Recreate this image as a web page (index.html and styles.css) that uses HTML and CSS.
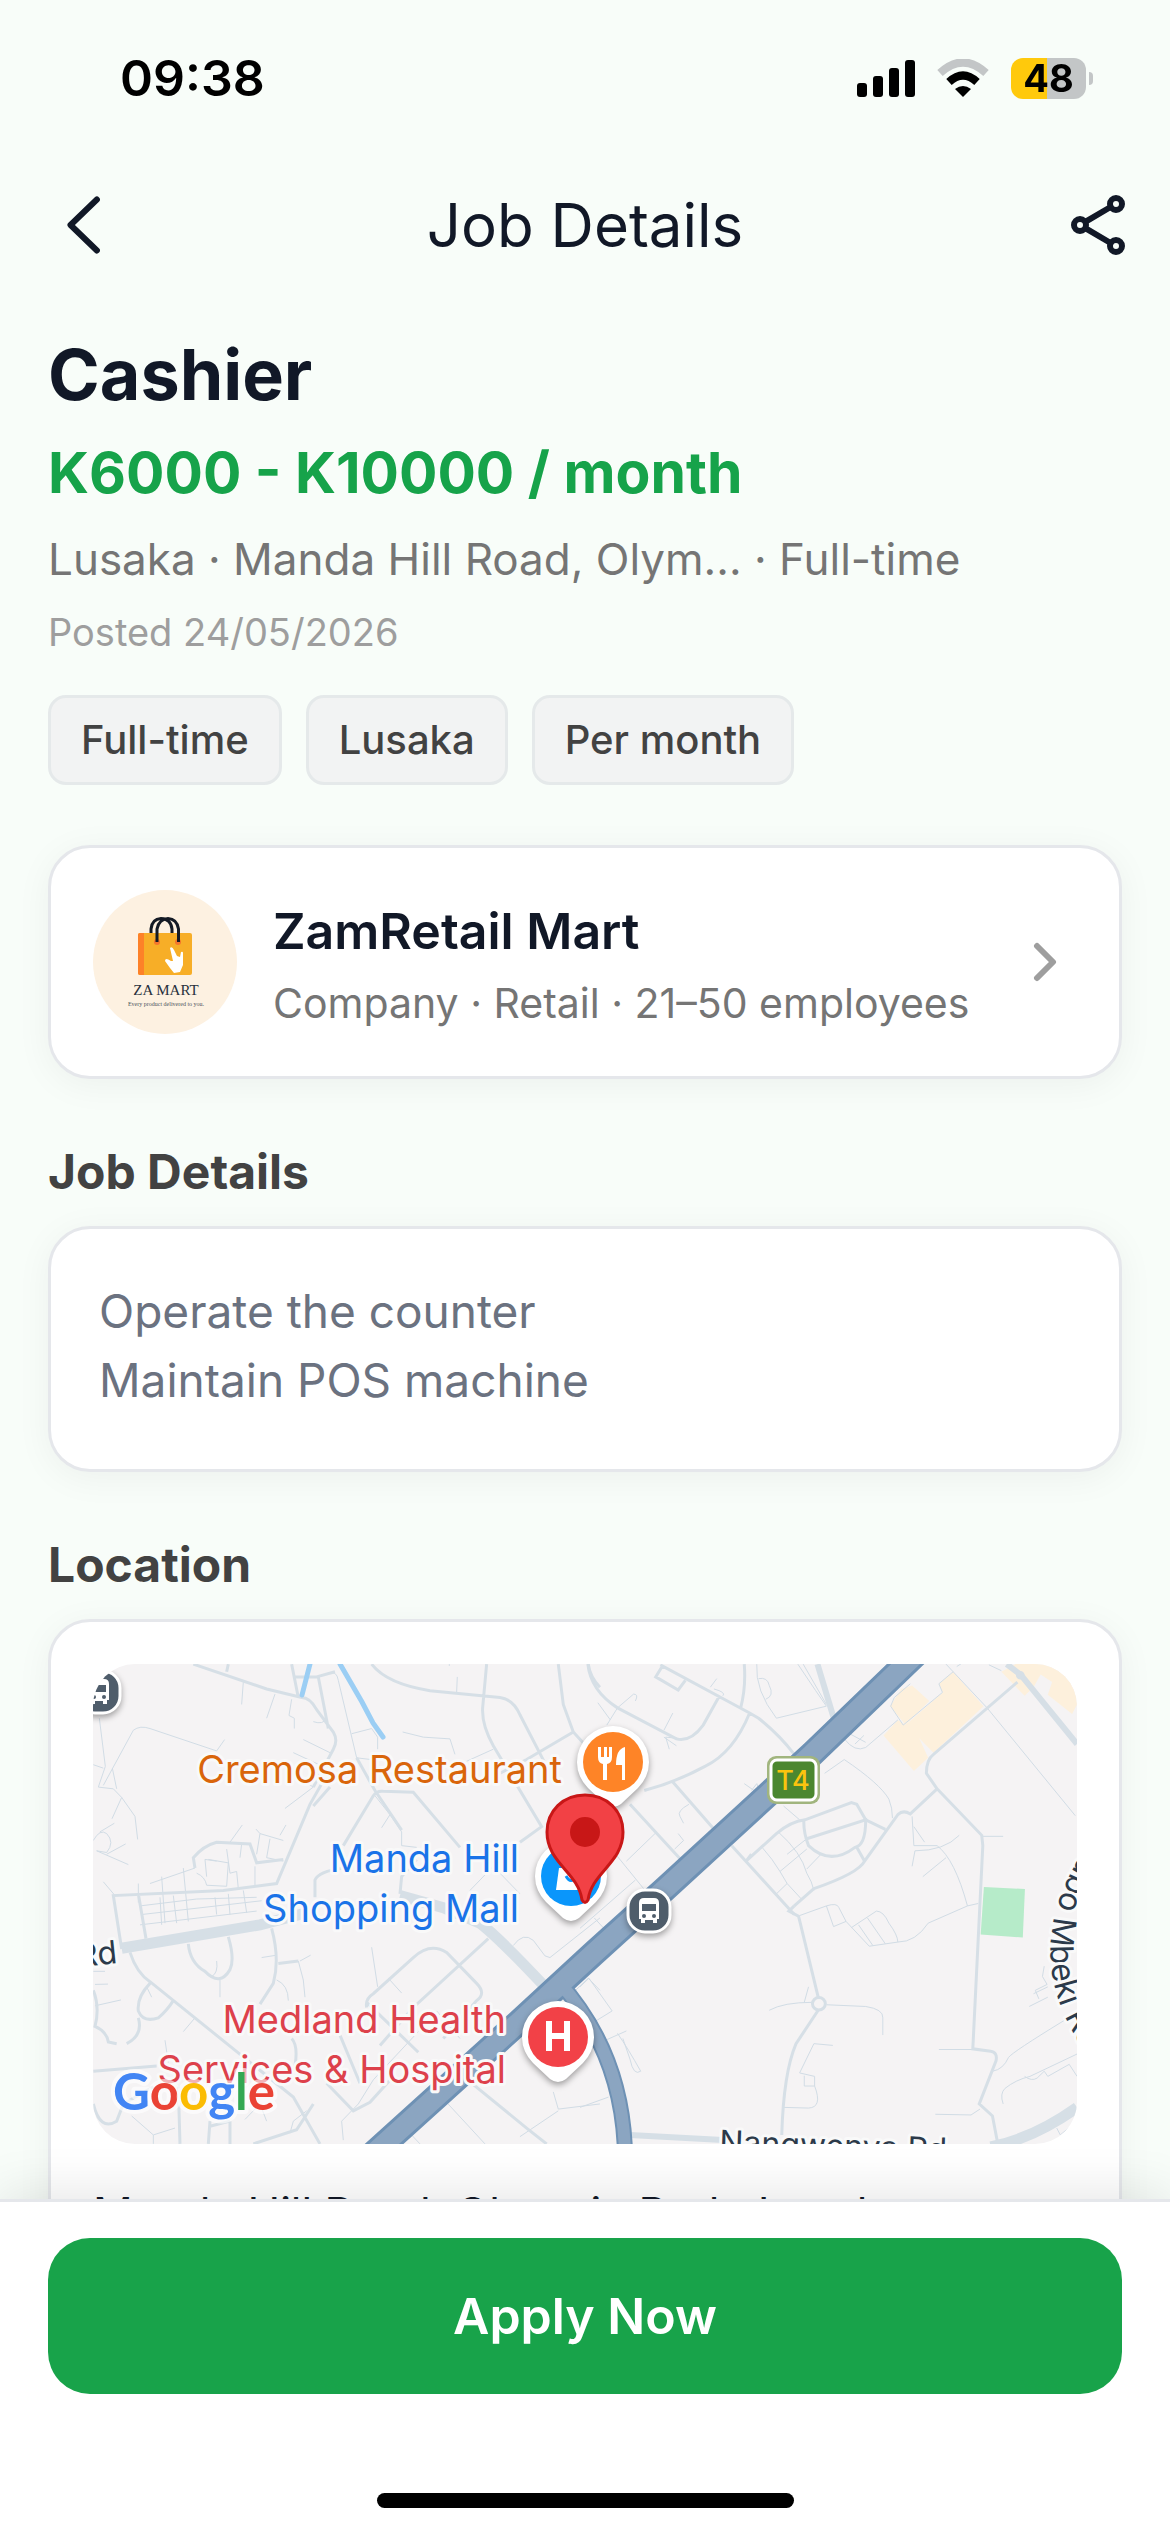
FILE: index.html
```html
<!DOCTYPE html>
<html lang="en">

<head>
    <meta charset="UTF-8">
    <meta name="viewport" content="width=device-width, initial-scale=1.0">
    <title>Job Details</title>
    <link rel="stylesheet" href="styles.css">
</head>

<body>
    <div class="status-bar">
        <span class="time">09:38</span>
        <div class="status-icons">
            <svg width="58" height="38" viewBox="0 0 58 38">
                <rect x="0" y="24" width="10" height="14" rx="3"/>
                <rect x="16" y="17" width="10" height="21" rx="3"/>
                <rect x="32" y="9" width="10" height="29" rx="3"/>
                <rect x="48" y="1" width="10" height="37" rx="3"/>
            </svg>
            <svg width="52" height="38" viewBox="0 0 52 38">
                <path d="M3 14 Q26 -7 49 14" fill="none" stroke="#c3c6c7" stroke-width="8"/>
                <path d="M12 23 Q26 10 40 23" fill="none" stroke="#000" stroke-width="8"/>
                <path d="M18 30 Q26 24 34 30 L26 38 Z"/>
            </svg>
            <div class="battery"><span>48</span></div>
        </div>
    </div>

    <header class="nav">
        <button class="icon-btn" aria-label="Back">
            <svg class="back" width="72" height="72" viewBox="0 0 24 24">
                <path d="M20.3 3.500 L11.500 12 L20.300 20.500"/>
            </svg>
        </button>
        <h1 class="nav-title">Job Details</h1>
        <button class="icon-btn" aria-label="Share">
            <svg width="72" height="72" viewBox="0 0 24 24">
                <circle cx="18" cy="5" r="2"/>
                <circle cx="6" cy="12" r="2"/>
                <circle cx="18" cy="19" r="2"/>
                <path d="M7.9 10.9 L16.2 6 M7.9 13.1 L16.2 18"/>
            </svg>
        </button>
    </header>

    <main class="content">
        <h2 class="job-title">Cashier</h2>
        <p class="salary">K6000 - K10000 / month</p>
        <p class="meta">Lusaka · Manda Hill Road, Olym... · Full-time</p>
        <p class="posted">Posted 24/05/2026</p>
        <div class="chips">
            <span class="chip">Full-time</span>
            <span class="chip">Lusaka</span>
            <span class="chip">Per month</span>
        </div>

        <a class="card company" href="#">
            <svg class="logo" width="144" height="144" viewBox="0 0 144 144">
                <circle cx="72" cy="72" r="72" fill="#fdf1e1"/>
                <rect x="45" y="43" width="54" height="42" rx="2" fill="#f7ae27"/>
                <path d="M47 43 H51 V85 H47 Q45 85 45 83 V45 Q45 43 47 43Z" fill="#fd8128"/>
                <circle cx="64" cy="52" r="3" fill="#f4762b"/>
                <circle cx="85" cy="52" r="3" fill="#f4762b"/>
                <g fill="none" stroke="#141a24" stroke-width="3">
                    <path d="M58 43 V39 Q59 29 68 28.500 Q78 29 79 39 V43"/>
                    <path d="M64 52 V39 Q66 29 75 28.500 Q84 29 85.500 39 V52"/>
                </g>
                <path d="M77 58 q2 -2 4 2 l3 6 3 1 1 -5 q2 -1 2 1 l0 12 -3 7 -6 1 -4 -5 -5 -7 q0 -4 6 0 l2 0 z" fill="#fff"/>
                <text class="logo-name" x="73" y="105">ZA MART</text>
                <text class="logo-tag" x="73" y="116">Every product delivered to you.</text>
            </svg>
            <div class="company-text">
                <h3>ZamRetail Mart</h3>
                <p>Company · Retail · 21–50 employees</p>
            </div>
            <svg class="chevron" width="24" height="40" viewBox="0 0 24 40">
                <path d="M4 4 L20 20 L4 36"/>
            </svg>
        </a>

        <h2 class="section-title">Job Details</h2>
        <div class="card description">
            <p>Operate the counter</p>
            <p>Maintain POS machine</p>
        </div>

        <h2 class="section-title">Location</h2>
        <div class="card location">
            <svg class="map" viewBox="0 0 984 480" preserveAspectRatio="xMidYMid slice" role="img" aria-label="Map">
                <defs>
                    <path id="mbekiRoad" d="M1010 160 Q905 290 1010 410"/>
                    <g id="bus">
                        <rect x="-21" y="-21" width="42" height="42" rx="17" fill="#4f5d6b" stroke="#fff" stroke-width="3"/>
                        <path d="M-10 -8 Q-10 -13 -5 -13 H5 Q10 -13 10 -8 V8 H8 V12 H4 V9 H-4 V12 H-8 V8 H-10Z" fill="#fff"/>
                        <path d="M-7 -7 H7 V0 H-7Z" fill="#4f5d6b"/>
                        <circle cx="-5" cy="5" r="2" fill="#4f5d6b"/>
                        <circle cx="5" cy="5" r="2" fill="#4f5d6b"/>
                    </g>
                    <path id="pin" d="M-25 26 A36 36 0 1 1 25 26 L8 42 Q0 48 -8 42Z" fill="#fff"/>
                </defs>

                <rect width="984" height="480" fill="#f5f3f4"/>

                <!-- built-up areas and park -->
                <g transform="translate(487 -25) scale(.3571 .3444)">
                    <path d="M850 280 L890 235 L912 250 L1015 155 L1005 130 L1045 95 L1130 195 L990 330 L950 288 L975 345 L935 383Z" fill="#fdf0dc"/>
                    <path d="M868 195 L900 145 L930 135 L978 180 L912 250Z M1180 95 L1225 70 H1300 Q1385 80 1392 190 L1378 218 L1310 162 L1322 125 L1290 103 L1270 140 L1245 165Z" fill="#fdf0dc"/>
                    <path d="M1131 720 L1246 726 L1240 867 L1122 858Z" fill="#b6ebc9"/>
                </g>

                <!-- streets, west half -->
                <g class="streets" transform="translate(-13 -25) scale(.3333 .3444)">
                    <path class="thin" d="M70 425 L160 265 Q180 250 210 260 L410 325 L434 292 M58 230 L76 370 L55 430 L100 435 L125 460 L165 515 L173 582 M40 365 L70 375 M125 460 L96 522 M97 375 L110 435 M490 125 L485 190 M585 160 L560 230 M635 175 L627 222 L643 230 V260 M745 100 Q770 90 775 120 L830 345 L890 352 M815 275 L875 260 L893 285 V320 M968 270 L1030 285 L1110 290 L1125 335 M1240 320 L1160 355 M670 292 L750 330 M640 330 L740 375 M635 390 L700 430 L615 492 M885 455 L930 510 L905 548 M930 510 L965 560 V600 L1010 605 M700 240 Q730 250 740 230 M1132 110 L1130 155 M1108 73 V78"/>
                    <path class="thin" d="M70 705 L105 745 M40 585 Q60 550 80 565 Q105 590 80 620 L50 615 L145 655 M80 625 L137 595 M60 560 L103 535 M450 590 L487 540 M485 595 L480 635 M528 552 L540 565 L610 585 M600 570 L618 540 M540 565 L530 625 M570 580 L560 635 L610 645 M175 710 V765 M245 690 L255 825 M310 665 L325 820 M380 690 L375 640 L410 645 M440 610 L450 680 L470 675 L475 725 M525 660 V715 M490 730 L500 795 M240 750 L245 830 M280 745 L290 825 M180 775 L350 755 L530 750 M185 800 L545 760 M180 830 L530 790 M210 710 L345 665 M405 750 L410 800 M445 740 L450 800 M350 680 Q375 690 380 715 L440 718 L445 650 L385 640"/>
                    <path class="thin" d="M40 965 H75 M45 1003 L84 1002 M45 1065 L123 1048 M545 925 L590 918 M655 935 L670 990 L675 1040 M660 935 L692 918 M875 895 L893 1010 M410 935 Q415 970 395 980 M420 990 V1040 M590 990 Q625 1005 625 1050 M310 1140 L345 1100 M200 1010 L215 1040 M925 985 L965 1028 M1070 1080 L1140 1160 M1300 890 Q1330 850 1360 875 L1395 920 L1410 925 L1560 810 M1460 1045 L1525 985 L1560 1020 M1090 1335 L1215 1466 M985 1430 L1020 1466 M1420 1315 L1435 1365 L1560 1350 M1435 1370 L1320 1445 M790 1455 L785 1400 L835 1350 L880 1280 L1015 1140 M155 1385 L220 1440 L285 1420 M220 1440 V1466 M495 1395 L540 1350 L560 1400 M255 1165 L265 1230 M630 1435 L640 1400 L680 1370 M1220 610 V680 M1170 730 L1240 660 L1320 740"/>
                    <path d="M340 73 L560 145 L665 170 Q690 170 710 205 L760 270 Q775 295 760 320 L700 430 M635 73 L655 170 M645 110 H715 L745 260 M440 95 L445 73 M710 110 L765 95 M875 73 Q920 130 1050 150 L1260 170 Q1300 175 1320 220 L1400 370 M1220 73 L1208 200 Q1205 250 1240 310 L1385 545 L1320 590 M1435 73 L1450 190 L1480 270 L1560 355 M1480 270 L1340 350 L1240 400 M1560 140 Q1530 110 1525 73"/>
                    <path d="M790 600 L880 455 Q890 440 910 442 L1000 445 L1140 605 M740 395 L690 480 L590 710 L430 730 L100 745 L125 900 M700 485 L750 430 M345 665 L340 635 Q370 600 410 590 L510 595 L530 650 L610 640 M175 740 L198 870 M705 750 V700 Q715 675 790 665 M960 740 L965 690 L1010 640 M830 345 L885 440 L965 555"/>
                    <path d="M150 910 Q170 970 210 995 L460 1190 L640 1330 L720 1466 M325 885 Q330 940 375 965 Q420 1010 450 960 Q465 930 445 865 M575 840 Q600 930 580 1000 L540 1060 M595 942 L655 935 M210 1000 Q170 1040 175 1080 Q190 1115 235 1100 Q260 1080 280 1050 M175 1100 Q190 1150 140 1175 M40 1020 Q60 1070 45 1125 Q80 1140 85 1170 L110 1175 M40 1255 L230 1240 M635 1160 Q655 1180 645 1240 M40 1350 Q60 1430 110 1400 L130 1350 L220 1300 M295 1300 L300 1466 M390 1400 L385 1466 M450 1400 V1466 M390 1415 L450 1400 M520 1466 L650 1425 L700 1350"/>
                    <path d="M860 1070 Q855 1045 880 1030 L1000 925 Q1050 880 1100 910 L1190 1000 Q1220 1030 1190 1050 L1090 1160 M860 1055 L940 1130 L1015 1200 M1225 870 L1000 1070 L900 1180 M740 1290 L820 1370 L870 1345 L940 1270 M1150 1270 L1340 1420 L1400 1466 M780 1150 L840 1290"/>
                    <path class="wide" d="M125 898 L540 830 L680 795 M960 745 L1090 780 L1200 825 Q1260 870 1400 1015"/>
                </g>

                <!-- streets, east half -->
                <g class="streets" transform="translate(487 -25) scale(.3571 .3444)">
                    <path class="thin" d="M50 185 L85 235 M75 250 L105 200 L150 160 Q165 160 155 180 M235 265 L260 215 M250 320 L240 285 L290 290 M235 285 L270 310 M365 140 L383 115 M375 145 Q410 155 400 165 M495 73 Q490 150 550 230 L690 195 L660 150 L610 73 M500 115 Q525 110 530 135 Q545 165 520 175 M625 73 L690 190 M740 290 Q770 330 800 315 L890 235 M755 275 L800 300 M770 305 L795 280 M685 390 L740 350 Q840 420 865 465 Q875 490 875 520 M460 420 L515 460 M480 440 L495 420 L505 445 M130 645 L215 560 M305 480 Q270 500 280 515 L290 535 M275 565 L290 585 L265 610 M570 485 L615 525 M100 625 L190 740 M0 840 L155 700 M40 810 L80 855 M0 1010 L25 985 L90 1080 L35 1115 L75 1165 M50 1175 L130 1138 M105 1145 Q135 1190 170 1255 Q150 1270 140 1220 L120 1160 M0 1360 L80 1330"/>
                    <path class="thin" d="M555 560 Q620 620 635 680 Q650 705 655 730 M510 605 Q540 640 560 675 L580 710 L620 755 M560 675 L635 610 M550 740 L580 710 M580 625 L635 580 M635 668 L675 625 M930 515 L935 600 L1000 600 Q1050 640 1085 775 L1115 768 M935 545 L965 590 M930 660 L938 615 Q1020 615 1062 570 M960 690 L1025 635 M1125 573 H1185 M1085 775 L975 825 Q940 880 890 880 L810 892 L745 820 L710 835 L690 775 L615 803 M690 775 Q720 765 725 780 L745 820 M760 838 L830 790 Q850 790 865 825 Q890 860 890 880 M780 830 L820 890 M805 810 L855 885 M640 1010 L628 1055 M530 1078 Q570 1055 650 1055 M690 1062 L800 1067 Q850 1075 848 1100 V1150 M708 1180 L655 1175 L615 1260 L657 1270 V1298 H628 V1268 M657 1298 Q680 1360 640 1362 L570 1360 M1005 1192 H1100 M995 1380 L1095 1382 L1120 1365 M1155 1255 Q1185 1250 1200 1215 Q1210 1200 1360 1105 M1185 1350 Q1175 1320 1190 1305 Q1220 1280 1260 1270 L1392 1205 M1245 1270 Q1265 1285 1280 1275 L1300 1255 L1310 1270 L1370 1235 L1392 1270 M1270 1030 L1310 1010 M1300 950 L1295 980 L1308 1003 L1275 1020 L1285 1045 M1258 1067 L1310 1040 M1335 1420 L1345 1440 L1385 1405 M1025 73 L1140 200 L1387 513 M870 195 L905 250 L1015 155 L1005 130 L1045 95 M870 195 L880 170 L925 130 M1055 80 L1070 70 M1145 75 L1180 92"/>
                    <path d="M22 73 Q30 150 105 200 L270 290 Q310 300 345 250 L388 170 M225 75 L475 215 L500 230 Q560 280 600 335 M230 80 L212 110 L275 148 L295 120 M460 73 Q465 140 450 200 M475 215 Q430 330 350 370 Q270 415 180 440 M260 415 L390 570 M140 480 L295 655 M465 645 L550 565 Q590 530 630 525 L760 475 L775 480 L800 525 L855 553 M635 580 L800 525 Q800 600 770 605 Q700 660 640 600 Q625 560 627 525 M775 605 L797 645 M425 600 L600 800 M465 645 L480 625 M600 775 L655 725 Q780 680 797 645 L890 510 Q905 495 925 508 L1000 435 L1125 570 L1128 600 L1100 1190 L1150 1197 Q1170 1200 1165 1225 L1118 1350 L1155 1385 L1170 1466 M1000 435 L970 390 Q970 350 990 335 L1225 125"/>
                    <path d="M600 775 L585 790 L612 805 L618 830 L667 1040 M667 1078 L605 1175 Q570 1260 565 1440"/>
                    <circle cx="669" cy="1059" r="18"/>
                    <path class="mid" d="M665 73 L715 245 M1195 73 L1235 105 L1392 305 M140 1440 L400 1455"/>
                    <circle cx="1233" cy="105" r="8"/>
                    <path class="wide" d="M1392 1360 Q1270 1450 1150 1475"/>
                </g>

                <!-- rivers -->
                <path class="river" d="M217 0 L209 31 M247 0 L269 38 L280 59 L290 73"/>

                <!-- T4 highway -->
                <g class="highway">
                    <path class="edge" d="M823 -10 L719 90 L573 224 L500 290 L425 359 L280 490"/>
                    <path class="edge branch" d="M466 318 Q530 390 532 490"/>
                    <path d="M823 -10 L719 90 L573 224 L500 290 L425 359 L280 490"/>
                    <path class="branch" d="M466 318 Q530 390 532 490"/>
                </g>

                <g class="road-label">
                    <text x="626" y="489" transform="rotate(2 626 489)">Nangwenya Rd</text>
                    <text x="25" y="299" text-anchor="end" transform="rotate(-6 25 299)">Rd</text>
                    <text><textPath href="#mbekiRoad">Thabo Mbeki Rd</textPath></text>
                </g>

                <g class="place-label">
                    <text x="469" y="119" fill="#d9650b">Cremosa Restaurant</text>
                    <text x="426" y="208" fill="#1a73e8">Manda Hill</text>
                    <text x="426" y="258" fill="#1a73e8">Shopping Mall</text>
                    <text x="413" y="369" fill="#dd414b">Medland Health</text>
                    <text x="413" y="419" fill="#dd414b">Services &amp; Hospital</text>
                </g>

                <rect x="674" y="92" width="53" height="48" rx="9" fill="#a1b57e"/>
                <rect x="678" y="96" width="45" height="40" rx="6" fill="#4b872f" stroke="#fff" stroke-width="3"/>
                <text class="shield" x="700" y="126">T4</text>

                <g class="pins">
                    <use href="#bus" x="556" y="247"/>
                    <use href="#bus" x="6" y="28"/>
                    <g transform="translate(520 98)">
                        <use href="#pin"/>
                        <circle r="30" fill="#fe8427"/>
                        <path d="M-15 -15 V-5 Q-15 1 -10 2 V18 H-6 V2 Q-1 1 -1 -5 V-15 H-4 V-5 H-6 V-15 H-9 V-5 H-12 V-15Z M12 -15 Q3 -13 3 3 H9 V18 H12Z" fill="#fff"/>
                    </g>
                    <g transform="translate(478 212)">
                        <use href="#pin"/>
                        <circle r="30" fill="#0a96fb"/>
                        <path d="M-12 -8 H12 L15 14 H-15Z" fill="#fff"/>
                        <path d="M-5 0 Q0 9 5 0" fill="none" stroke="#0a96fb" stroke-width="3"/>
                    </g>
                    <g transform="translate(465 373)">
                        <use href="#pin"/>
                        <circle r="30" fill="#f24147"/>
                        <path d="M-12 -16 H-6 V-4 H6 V-16 H12 V14 H6 V2 H-6 V14 H-12Z" fill="#fff"/>
                    </g>
                </g>
                <path d="M492 131 C514 131 530 147 530 168 C530 199 499 208 495 236 Q492 241 489 236 C485 208 454 199 454 168 C454 147 470 131 492 131Z" fill="#f24145" stroke="#c81717" stroke-width="3"/>
                <circle cx="492" cy="168" r="15" fill="#c81717"/>

                <text class="google" x="20" y="446"><tspan fill="#4285f4">G</tspan><tspan fill="#ea4335">o</tspan><tspan fill="#fbbc04">o</tspan><tspan fill="#4285f4">g</tspan><tspan fill="#34a853">l</tspan><tspan fill="#ea4335">e</tspan></text>
            </svg>
            <p class="address">Manda Hill Road, Olympic Park, Lusaka</p>
        </div>
    </main>

    <footer class="footer">
        <button class="apply">Apply Now</button>
        <div class="home-bar"></div>
    </footer>
</body>

</html>
```
FILE: styles.css
```css
* {
    box-sizing: border-box;
    margin: 0;
    padding: 0;
}

body {
    background-color: #f8fdf9;
    color: #111827;
    font-family: Inter, "Liberation Sans", sans-serif;
    display: flex;
    flex-direction: column;
    height: 100vh;
    overflow: hidden;
}

.status-bar {
    display: flex;
    justify-content: space-between;
    align-items: center;
    flex-shrink: 0;
    height: 141px;
    padding: 15px 76px 0 120px;
    color: #000;
}

.time {
    font-size: 50px;
    font-weight: 600;
}

.status-icons {
    display: flex;
    align-items: center;
    gap: 22px;
}

.battery {
    position: relative;
    width: 75px;
    height: 41px;
    margin-right: 8px;
    border-radius: 12px;
    background: linear-gradient(to right, #ffc90c 48%, #c3c6c7 48%);
    font-size: 38px;
    font-weight: 700;
    line-height: 41px;
    text-align: center;
}

/* battery cap */
.battery::after {
    content: "";
    position: absolute;
    right: -7px;
    top: 14px;
    width: 4px;
    height: 13px;
    border-radius: 0 4px 4px 0;
    background-color: #c3c6c7;
}

.nav {
    display: flex;
    justify-content: space-between;
    align-items: center;
    flex-shrink: 0;
    height: 168px;
    padding: 0 36px;
}

.nav-title {
    font-size: 60px;
    font-weight: 400;
}

.icon-btn {
    display: flex;
    border: none;
    background: none;
    cursor: pointer;
}

.icon-btn svg {
    fill: none;
    stroke: #111827;
    stroke-width: 2;
    stroke-linecap: round;
    stroke-linejoin: round;
}

.content {
    flex: 1;
    min-height: 0;
    padding: 26px 48px 48px;
    overflow-y: auto;
    scrollbar-width: none;
}

.job-title {
    margin-bottom: 24px;
    font-size: 70px;
    font-weight: 700;
    line-height: 80px;
}

.salary {
    margin-bottom: 24px;
    color: #16a34a;
    font-size: 57px;
    font-weight: 700;
    line-height: 68px;
}

.meta {
    margin-bottom: 24px;
    color: #757575;
    font-size: 44px;
    line-height: 56px;
}

.posted {
    margin-bottom: 42px;
    color: #9e9e9e;
    font-size: 38px;
    line-height: 42px;
}

.chips {
    display: flex;
    gap: 24px;
    margin-bottom: 60px;
}

.chip {
    padding: 0 30px;
    border: 3px solid #e5e9ea;
    border-radius: 18px;
    background-color: #f2f3f3;
    color: #424242;
    font-size: 40px;
    font-weight: 500;
    line-height: 84px;
}

.card {
    border: 3px solid #e5e7eb;
    border-radius: 42px;
    background-color: #fff;
    box-shadow: 0 6px 36px rgba(0, 0, 0, 0.05);
}

.company {
    display: flex;
    align-items: center;
    gap: 36px;
    padding: 42px;
    color: #111827;
    text-decoration: none;
}

.logo {
    flex-shrink: 0;
}

.logo-name {
    fill: #27303c;
    font-family: "Liberation Serif", serif;
    font-size: 15px;
    text-anchor: middle;
}

.logo-tag {
    fill: #4b525b;
    font-family: "Liberation Serif", serif;
    font-size: 6px;
    text-anchor: middle;
}

.company-text {
    flex: 1;
    padding-top: 10px;
}

.company h3 {
    margin-bottom: 12px;
    font-size: 50px;
    font-weight: 600;
    line-height: 60px;
}

.company p {
    color: #757575;
    font-size: 41px;
    line-height: 60px;
}

.chevron {
    margin-right: 20px;
    fill: none;
    stroke: #9e9e9e;
    stroke-width: 6;
    stroke-linecap: round;
    stroke-linejoin: round;
}

.section-title {
    margin: 63px 0 24px;
    color: #424242;
    font-size: 48px;
    font-weight: 700;
    line-height: 60px;
}

.description {
    padding: 48px 48px 54px;
    color: #6b7280;
    font-size: 46px;
    line-height: 69px;
}

.location {
    padding: 42px;
}

.map {
    display: block;
    width: 100%;
    height: 480px;
    border-radius: 42px;
}

.address {
    margin-top: 42px;
    font-size: 44px;
    line-height: 54px;
}

.streets {
    fill: none;
    stroke: #d6dfe6;
    stroke-width: 3;
}

.streets * {
    vector-effect: non-scaling-stroke;
}

.streets .thin {
    stroke: #d1dce5;
    stroke-width: 1px;
}

.streets .mid {
    stroke-width: 6px;
}

.streets .wide {
    stroke-width: 11px;
}

.river {
    fill: none;
    stroke: #9bcef4;
    stroke-width: 5;
    stroke-linecap: round;
}

.highway {
    fill: none;
    stroke: #8ba5c1;
    stroke-width: 20;
}

.highway .edge {
    stroke: #6e91b4;
    stroke-width: 26;
}

.highway .branch {
    stroke-width: 12;
}

.highway .edge.branch {
    stroke-width: 16;
}

.place-label,
.road-label {
    font-size: 38px;
    paint-order: stroke;
    stroke: #f9f9f9;
    stroke-width: 6px;
    stroke-linejoin: round;
}

.place-label {
    text-anchor: end;
}

.road-label {
    fill: #2c3a4a;
    font-size: 32px;
}

.shield {
    fill: #fbc30e;
    font-size: 27px;
    font-weight: 500;
    text-anchor: middle;
}

.pins {
    filter: drop-shadow(0 3px 3px rgba(0, 0, 0, 0.35));
}

.google {
    font-family: Lato, sans-serif;
    font-size: 51px;
    font-weight: 700;
    paint-order: stroke;
    stroke: rgba(255, 255, 255, 0.6);
    stroke-width: 8px;
    stroke-linejoin: round;
}

.footer {
    position: relative;
    flex-shrink: 0;
    padding: 36px 48px 24px;
    border-top: 3px solid #e5e7eb;
    background-color: #fff;
    box-shadow: 0 -6px 48px rgba(0, 0, 0, 0.1);
}

.apply {
    display: block;
    width: 100%;
    height: 156px;
    border: none;
    border-radius: 42px;
    background-color: #18a34a;
    color: #fff;
    font-family: inherit;
    font-size: 50px;
    font-weight: 600;
    cursor: pointer;
}

.home-bar {
    width: 417px;
    height: 15px;
    margin: 99px auto 0;
    border-radius: 8px;
    background-color: #000;
}
```
